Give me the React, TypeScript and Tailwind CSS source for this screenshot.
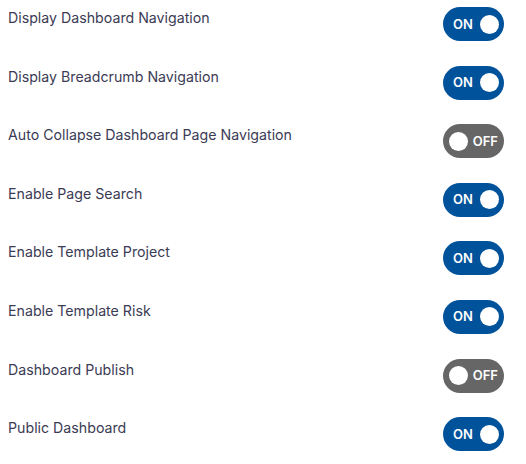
const settings = [
  { label: 'Display Dashboard Navigation', on: true },
  { label: 'Display Breadcrumb Navigation', on: true },
  { label: 'Auto Collapse Dashboard Page Navigation', on: false },
  { label: 'Enable Page Search', on: true },
  { label: 'Enable Template Project', on: true },
  { label: 'Enable Template Risk', on: true },
  { label: 'Dashboard Publish', on: false },
  { label: 'Public Dashboard', on: true },
];

function Toggle({ on }: { on: boolean }) {
  return (
    <div
      className={`w-[61px] h-[34px] rounded-full flex items-center justify-between ${
        on ? 'bg-[#00529b] pl-[10px] pr-[5px]' : 'bg-[#666666] pl-[6px] pr-[6px]'
      }`}
    >
      {on ? (
        <>
          <span className="text-white text-[13px] font-semibold leading-none">ON</span>
          <span className="w-[19px] h-[19px] rounded-full bg-white" />
        </>
      ) : (
        <>
          <span className="w-[19px] h-[19px] rounded-full bg-white" />
          <span className="text-white text-[13px] font-semibold leading-none">OFF</span>
        </>
      )}
    </div>
  );
}

export default function App() {
  return (
    <div className="bg-white w-[526px] h-[464px] px-2 font-['Inter','Liberation_Sans',sans-serif]">
      {settings.map((s) => (
        <div key={s.label} className="h-[58.6px] flex justify-between items-start pr-[14px]">
          <span className="text-[14.2px] text-[#3b3b55] mt-[7px]">{s.label}</span>
          <div className="mt-[7px]">
            <Toggle on={s.on} />
          </div>
        </div>
      ))}
    </div>
  );
}
